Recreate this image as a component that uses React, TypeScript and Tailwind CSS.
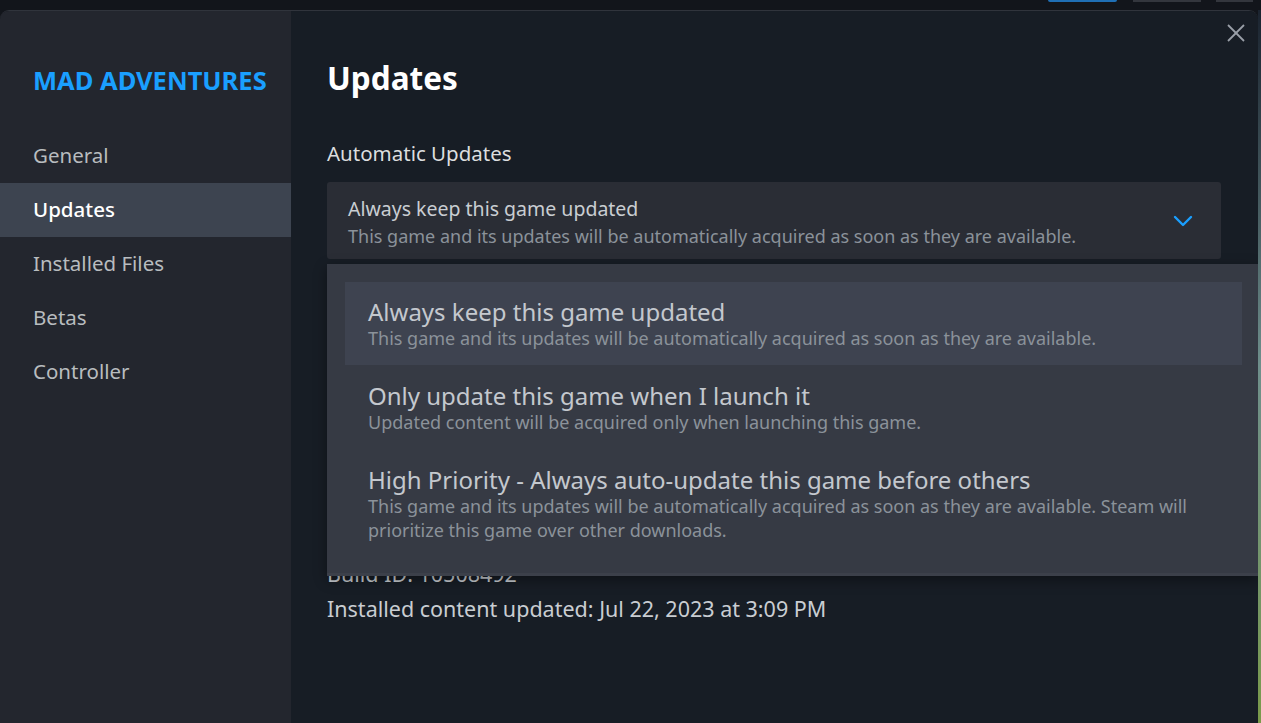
import React from "react";

const font = { fontFamily: '"Noto Sans", "Open Sans", sans-serif' };

function Chevron() {
  return (
    <svg width="20" height="12" viewBox="0 0 20 12" fill="none">
      <polyline points="2,2 10,10 18,2" stroke="#1a9fff" strokeWidth="2.4" strokeLinecap="round" strokeLinejoin="round" />
    </svg>
  );
}

function CloseIcon() {
  return (
    <svg width="20" height="20" viewBox="0 0 20 20" fill="none">
      <line x1="2" y1="2" x2="18" y2="18" stroke="#9aa0a8" strokeWidth="1.8" />
      <line x1="18" y1="2" x2="2" y2="18" stroke="#9aa0a8" strokeWidth="1.8" />
    </svg>
  );
}

const navItems = ["General", "Updates", "Installed Files", "Betas", "Controller"];

const options = [
  {
    title: "Always keep this game updated",
    desc: "This game and its updates will be automatically acquired as soon as they are available.",
    active: true,
  },
  {
    title: "Only update this game when I launch it",
    desc: "Updated content will be acquired only when launching this game.",
    active: false,
  },
  {
    title: "High Priority - Always auto-update this game before others",
    desc: "This game and its updates will be automatically acquired as soon as they are available. Steam will prioritize this game over other downloads.",
    active: false,
  },
];

export default function App() {
  return (
    <div className="w-[1261px] h-[723px] bg-[#12151b] flex flex-col overflow-hidden" style={font}>
      <div className="h-[10px] flex items-start">
        <div className="w-[1048px]" />
        <div className="w-[69px] h-[2px] bg-[#1f6fb5] rounded-b-sm" />
        <div className="w-[16px]" />
        <div className="w-[68px] h-[2px] bg-[#33363d]" />
        <div className="w-[15px]" />
        <div className="w-[37px] h-[2px] bg-[#33363d]" />
      </div>
      <div className="flex-1 flex">
        <div className="w-[1258px] flex rounded-t-[9px] overflow-hidden border-t border-[#30343c] relative">
          {/* Sidebar */}
          <div className="w-[291px] bg-[#23262e] flex flex-col pt-[53px]">
            <div className="px-[33px] h-[32px] flex items-center whitespace-nowrap text-[25.5px] font-bold text-[#1a9fff]">
              MAD ADVENTURES
            </div>
            <div className="h-[33px]" />
            {navItems.map((n) => (
              <div
                key={n}
                className={
                  n === "Updates"
                    ? "h-[54px] px-[33px] flex items-center pb-[2px] text-[20.5px] bg-[#3d4450] text-white font-medium"
                    : "h-[54px] px-[33px] flex items-center pb-[2px] text-[20.5px] text-[#b8bcbf]"
                }
              >
                {n}
              </div>
            ))}
          </div>
          {/* Main */}
          <div className="flex-1 bg-[#171d25] pl-[36px] pt-[47px] flex flex-col relative">
            <div className="absolute right-[12px] top-[12px]">
              <CloseIcon />
            </div>
            <div className="h-[40px] flex items-center text-[31.5px] font-bold text-white">Updates</div>
            <div className="h-[42px]" />
            <div className="h-[26px] flex items-center text-[20.5px] text-[#dcdedf]">Automatic Updates</div>
            <div className="h-[16px]" />
            <div className="w-[894px] h-[77px] bg-[#2a2d35] rounded-[3px] flex items-center pl-[21px] pr-[28px]">
              <div className="flex-1 flex flex-col self-start pt-[14px]">
                <div className="text-[19.5px] leading-[26px] text-[#c9cdd2]">Always keep this game updated</div>
                <div className="text-[18px] leading-[24px] text-[#8b929a] mt-[2px]">
                  This game and its updates will be automatically acquired as soon as they are available.
                </div>
              </div>
              <Chevron />
            </div>
            <div className="h-[302px]" />
            <div className="h-[26px] flex items-center text-[21.5px] text-[#c9cdd2]">Build ID: 10508492</div>
            <div className="h-[9px]" />
            <div className="h-[26px] flex items-center text-[21.5px] text-[#c9cdd2]">
              Installed content updated: Jul 22, 2023 at 3:09 PM
            </div>

            {/* Dropdown menu overlay */}
            <div className="absolute left-[36px] top-[253px] w-[931px] h-[312px] bg-[#363a44] border-b-[3px] border-[#3c404a] p-[18px] pr-[16px] shadow-[0_4px_12px_rgba(0,0,0,0.4)]">
              {options.map((o) => (
                <div
                  key={o.title}
                  className={
                    o.active
                      ? "h-[83px] bg-[#3e4350] px-[23px] pt-[16px] mb-[1px]"
                      : "min-h-[84px] px-[23px] pt-[16px]"
                  }
                >
                  <div className="text-[24px] leading-[28px] text-[#c4c8ce]">{o.title}</div>
                  <div className="text-[18px] leading-[24px] text-[#8b929a] pr-[10px]">{o.desc}</div>
                </div>
              ))}
            </div>
          </div>
        </div>
        <div className="flex-1 bg-gradient-to-b from-[#1b2430] via-[#6f8f8c] to-[#7a9a4a]" />
      </div>
    </div>
  );
}
